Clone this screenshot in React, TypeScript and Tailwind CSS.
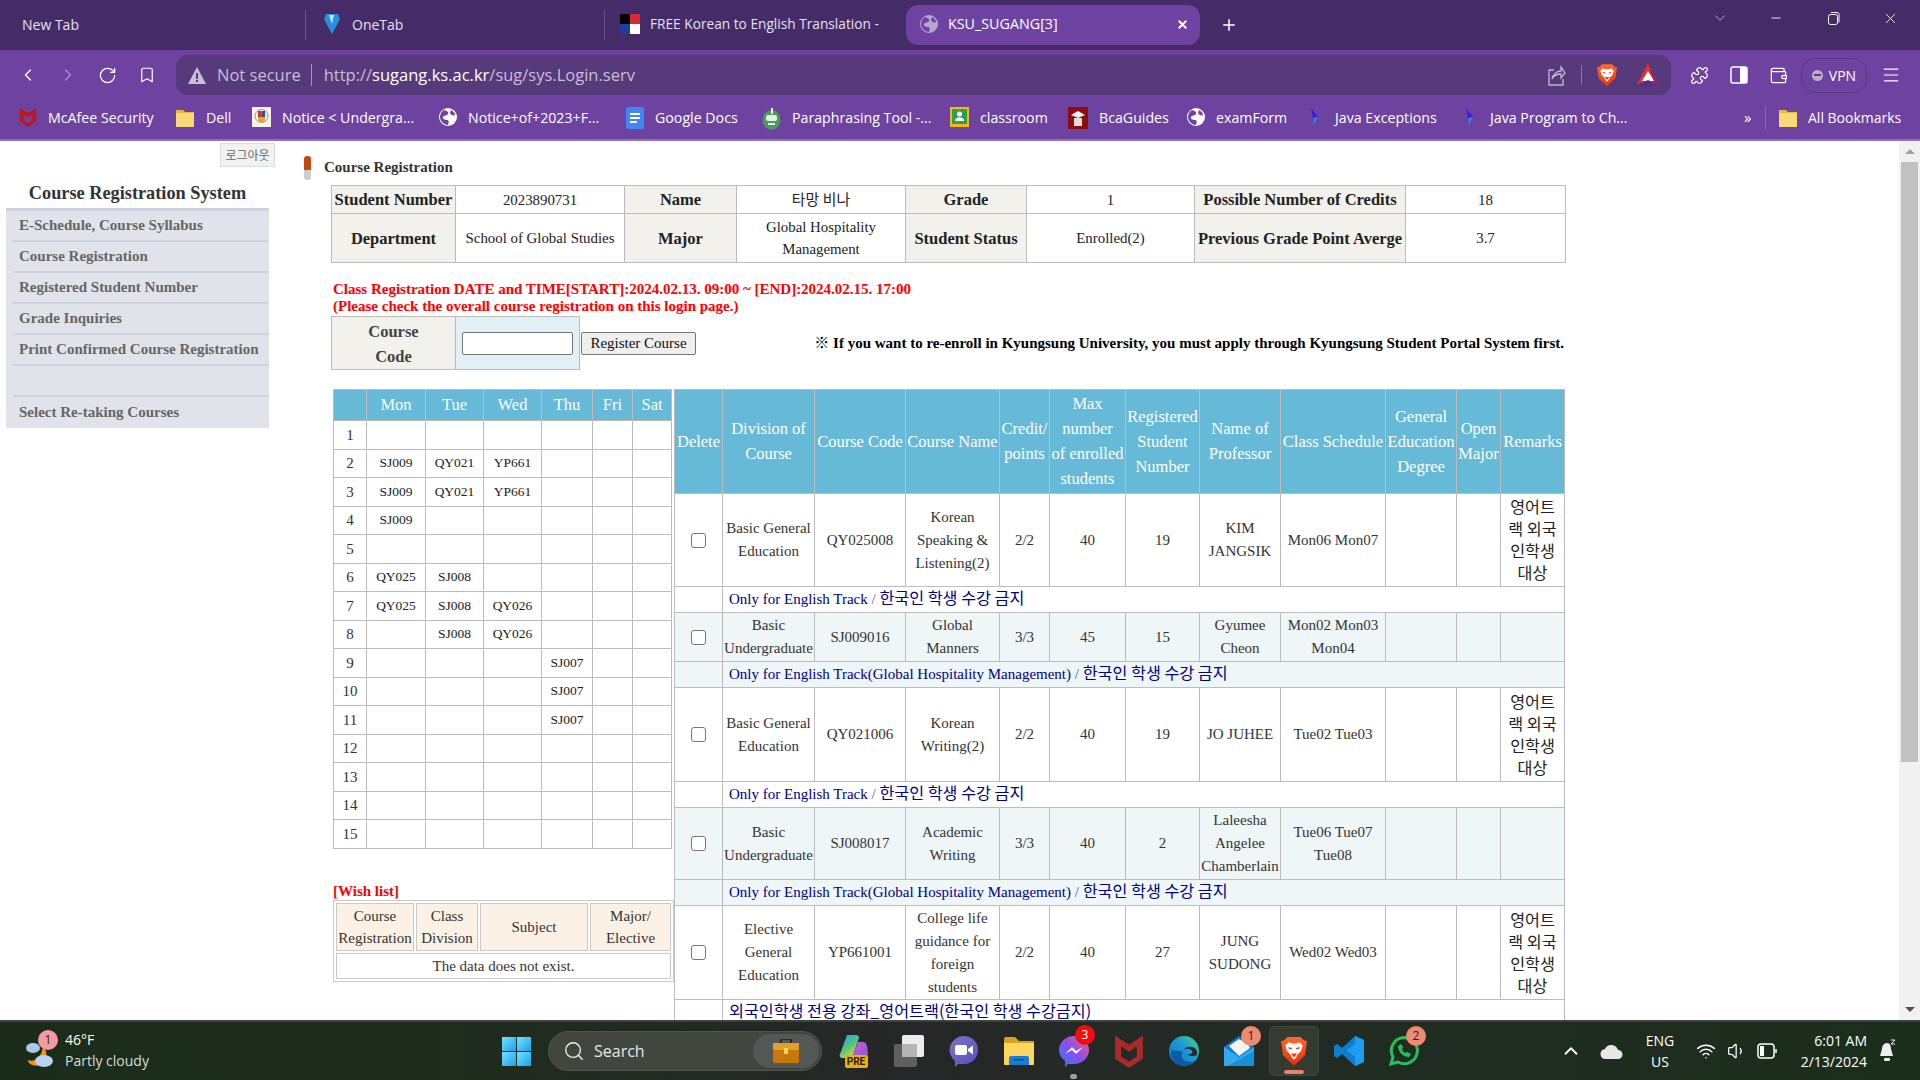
import React from "react";
import { ChevronLeft, ChevronRight, RotateCw, Bookmark, ChevronDown, Minus, X, Plus, Menu, Search, Wifi, Volume1, ChevronUp, Puzzle, Wallet } from "lucide-react";

const UI = "font-['Open_Sans','Noto_Sans',sans-serif]";
const KR = "font-['Liberation_Serif','Noto_Sans_CJK_KR',serif]";
const bd = "border border-[#bcbcbc]";

const Globe = ({ s = 18, fg = "#fff", bg = "#6e42a0" }: { s?: number; fg?: string; bg?: string }) => (
  <svg width={s} height={s} viewBox="0 0 18 18">
    <circle cx="9" cy="9" r="9" fill={fg} />
    <path d="M5 2c3 1 5 2 4 4S5 7 4 9s2 3 4 3 2 2 1 5C5 17 1 13 1 9c0-3 2-6 4-7zM12 2c2 1 4 3 4 5-2 1-4 0-5-2z" fill={bg} />
  </svg>
);
const Folder = () => (
  <svg width="20" height="22" viewBox="0 0 20 22">
    <path d="M1 3h7l2 2h9v15H1z" fill="#e9b93a" />
    <rect x="1" y="6" width="18" height="14" rx="1" fill="#f8d976" />
  </svg>
);
const McAfee = ({ w = 18, h = 20, c = "#c01818" }: { w?: number; h?: number; c?: string }) => (
  <svg width={w} height={h} viewBox="0 0 18 22">
    <path fillRule="evenodd" d="M0 1l4.500 3L9 7l4.500-3L18 1v15l-9 6-9-6zM4 8v6.500l5 3.300 5-3.300V8l-5 3.500z" fill={c} />
  </svg>
);
const Brave = ({ w = 20, h = 24, id = "br" }: { w?: number; h?: number; id?: string }) => (
  <svg width={w} height={h} viewBox="0 0 24 28">
    <defs><linearGradient id={id} x1="0" y1="0" x2="0" y2="1"><stop offset="0" stopColor="#ff6a2b" /><stop offset="1" stopColor="#ee2f0c" /></linearGradient></defs>
    <path d="M6 1h12l3 3 3 1-2 13-10 9.500L2 18 0 5l3-1z" fill={`url(#${id})`} />
    <path d="M7 6l3 1h4l3-1 3 3-1.500 5-3 3-1.500 3-2 2-2-2-1.500-3-3-3L4 9z" fill="#fff" />
    <path d="M7 11l3 1M17 11l-3 1M10.500 17h3l-1.500 2z" stroke="#ee3a12" strokeWidth="1.300" fill="none" />
  </svg>
);
const Ja = () => (
  <svg width="12" height="20" viewBox="0 0 12 20">
    <path d="M2 1l7 9-5 1z" fill="#3b1ae0" />
    <path d="M9 10l-5 9 1-8z" fill="#1c8ce8" />
  </svg>
);

const bookmarks: [number, React.ReactNode, string][] = [
  [156, <McAfee />, "McAfee Security"],
  [77, <Folder />, "Dell"],
  [187, <svg width="19" height="20" viewBox="0 0 19 20"><rect width="19" height="20" fill="#f4f2ea" /><circle cx="9.500" cy="9" r="6.500" fill="none" stroke="#9a9a8a" /><rect x="6" y="4" width="3.500" height="6" fill="#c73a2a" /><rect x="9.500" y="4" width="3.500" height="6" fill="#2a4ea0" /><path d="M6 10h7v2a3.500 3.500 0 0 1-7 0z" fill="#e8a820" /></svg>, "Notice < Undergra..."],
  [187, <Globe />, "Notice+of+2023+F..."],
  [136, <svg width="18" height="22" viewBox="0 0 18 22"><rect width="18" height="22" rx="2" fill="#4285f4" /><rect x="4" y="6" width="10" height="2" fill="#fff" /><rect x="4" y="10" width="10" height="2" fill="#fff" /><rect x="4" y="14" width="7" height="2" fill="#fff" /></svg>, "Google Docs"],
  [188, <svg width="19" height="24" viewBox="0 0 19 24"><ellipse cx="9.500" cy="14" rx="9" ry="10" fill="#4a9a5c" /><rect x="4" y="9" width="11" height="6" rx="2" fill="#e6f1e2" /><rect x="6" y="17" width="7" height="2" fill="#e6f1e2" /><rect x="9" y="2" width="2" height="6" fill="#e6f1e2" /></svg>, "Paraphrasing Tool -..."],
  [118, <svg width="19" height="20" viewBox="0 0 19 20"><rect width="19" height="20" fill="#f5b90f" /><rect x="2" y="2" width="15" height="15" fill="#2f9e4f" /><circle cx="9.500" cy="7" r="2.500" fill="#fff" /><path d="M5 14c0-5 9-5 9 0z" fill="#fff" /></svg>, "classroom"],
  [119, <svg width="20" height="22" viewBox="0 0 20 22"><rect width="20" height="22" fill="#8b0d0d" /><path d="M3 8l7-4 7 4-7 3z" fill="#eee" /><path d="M6 11h8v8H6z" fill="#ddd" /></svg>, "BcaGuides"],
  [120, <Globe />, "examForm"],
  [155, <span className="ml-[2px] mr-[3px]"><Ja /></span>, "Java Exceptions"],
];

function Bookmarks() {
  return (
    <div className={`h-[42px] pb-[3px] bg-[#6e42a0] border-b-2 border-[#9170b8] flex items-center pl-[19px] text-[14.2px] text-white ${UI}`}>
      {bookmarks.map(([w, icon, t], i) => (
        <div key={i} className="flex items-center gap-[11px] shrink-0" style={{ width: w }}>
          <span className="flex items-center">{icon}</span>
          <span className="whitespace-nowrap">{t}</span>
        </div>
      ))}
      <div className="flex items-center gap-[11px] w-[285px] shrink-0">
        <span className="ml-[2px] mr-[3px] flex"><Ja /></span>
        <span className="whitespace-nowrap">Java Program to Ch...</span>
      </div>
      <span className="text-[15px] w-[18px] shrink-0 -ml-[3px] mr-[3px]">»</span>
      <span className="w-px h-[24px] bg-[#8a66b2] mr-[12px]" />
      <div className="flex items-center gap-[10px] shrink-0"><Folder /><span className="whitespace-nowrap text-[14px]">All Bookmarks</span></div>
    </div>
  );
}

function TabBar() {
  return (
    <div className={`h-[50px] bg-[#452c68] flex items-center text-[14px] text-[#e6e0ee] ${UI}`}>
      <div className="w-[306px] pl-[22px] h-[30px] pb-[2px] flex items-center border-r border-[#6a5488] shrink-0">New Tab</div>
      <div className="w-[299px] pl-[16px] h-[30px] pb-[2px] flex items-center gap-[10px] border-r border-[#6a5488] shrink-0">
        <svg width="20" height="22" viewBox="0 0 20 22"><path d="M4 1h12l2 5-8 15L2 6z" fill="#2b8fe0" /><path d="M7 2h5l-2 9z" fill="#bfe6ff" /></svg>
        <span>OneTab</span>
      </div>
      <div className="w-[301px] pl-[15px] h-[30px] pb-[2px] flex items-center gap-[10px] shrink-0 overflow-hidden">
        <svg width="20" height="20" viewBox="0 0 20 20" className="shrink-0"><rect width="10" height="10" fill="#000" /><rect x="10" width="10" height="10" fill="#d8283a" /><rect y="10" width="10" height="10" fill="#1a3fa0" /><rect x="10" y="10" width="10" height="10" fill="#fff" /></svg>
        <span className="whitespace-nowrap text-[13.7px]">FREE Korean to English Translation -</span>
      </div>
      <div className="w-[294px] h-[40px] pb-[2px] bg-[#6e42a0] rounded-[12px] flex items-center pl-[14px] pr-[11px] shrink-0 text-white">
        <Globe s={18} fg="#b7a4cf" bg="#6e42a0" />
        <span className="ml-[10px] flex-1 text-[14.3px]">KSU_SUGANG[3]</span>
        <X size={13} strokeWidth={3.5} />
      </div>
      <Plus size={18} className="ml-[20px] text-white" strokeWidth={2} />
      <div className="ml-auto flex items-center pr-[21px] -mt-[14px] text-white">
        <ChevronDown size={18} strokeWidth={1} className="mr-[40px] text-[#d6cde2]" />
        <Minus size={14} strokeWidth={1.500} className="mr-[44px]" />
        <svg width="14" height="14" viewBox="0 0 14 14" fill="none" stroke="#fff" className="mr-[41px]"><rect x="1.500" y="3.500" width="9" height="10" rx="2" /><path d="M4 1.500h6a2 2 0 0 1 2 2v8" /></svg>
        <X size={17} strokeWidth={1.200} />
      </div>
    </div>
  );
}

function ToolBar() {
  return (
    <div className={`h-[49px] pt-[1px] bg-[#6e42a0] flex items-center text-white ${UI}`}>
      <div className="w-[176px] shrink-0 flex items-center pl-[18px] gap-[20px]">
        <ChevronLeft size={20} strokeWidth={1.600} />
        <ChevronRight size={20} strokeWidth={1.600} className="text-[#a78fc6]" />
        <RotateCw size={19} strokeWidth={1.600} />
        <Bookmark size={18} strokeWidth={1.600} className="ml-[1px]" />
      </div>
      <div className="w-[1495px] h-[40px] shrink-0 rounded-[12px] bg-[#563a7c] flex items-center pl-[12px] pr-[12px] text-[16.5px]">
        <svg width="18" height="17" viewBox="0 0 18 17"><path d="M9 0l9 17H0z" fill="#c7c0d2" /><rect x="8" y="6" width="2" height="6" fill="#563a7c" /><rect x="8" y="13" width="2" height="2" fill="#563a7c" /></svg>
        <span className="ml-[11px] text-[#c7bfd3]">Not secure</span>
        <span className="w-px h-[22px] bg-[#a596ba] ml-[10px] mr-[12px]" />
        <span className="text-[#c7bfd3]">http://<span className="text-white">sugang.ks.ac.kr</span>/sug/sys.Login.serv</span>
        <div className="ml-auto flex items-center">
          <svg width="19" height="21" viewBox="0 0 19 21" fill="none" stroke="#c2b8cf" strokeWidth="1.300"><path d="M7 5H2v15h14v-6" /><path d="M5 14c1-5 5-8 9-8V2l4 6-4 5V9c-3 0-7 1-9 5z" /></svg>
          <span className="w-px h-[20px] bg-[#8a76a6] mx-[15px]" />
          <Brave w={20} h={24} id="br1" />
          <svg width="22" height="24" viewBox="0 0 22 24" className="ml-[20px]"><path d="M11 0l11 22-11-5-11 5z" fill="#e4322b" /><path d="M11 0l11 22-5-2z" fill="#8a2a6a" /><path d="M11 8l6 10H5z" fill="#fff" /><path d="M0 22l11-5 11 5-11 2z" fill="#5d2a8a" /></svg>
        </div>
      </div>
      <Puzzle size={19} strokeWidth={1.600} className="ml-[19px] shrink-0" />
      <svg width="18" height="18" viewBox="0 0 18 18" fill="none" stroke="#fff" strokeWidth="1.500" className="ml-[21px] shrink-0"><rect x="1" y="1" width="16" height="16" rx="2" /><rect x="10" y="1" width="7" height="16" fill="#fff" stroke="none" /></svg>
      <Wallet size={19} strokeWidth={1.600} className="ml-[21px] shrink-0" />
      <div className="ml-[13px] w-[66px] h-[35px] shrink-0 rounded-[14px] border border-[#563a7c] flex items-center justify-center gap-[6px] text-[14px]">
        <span className="w-[11px] h-[11px] rounded-full bg-[#b8aecb] flex items-center justify-center"><span className="w-[7px] h-[2px] bg-[#563a7c]" /></span>
        <span>VPN</span>
      </div>
      <Menu size={20} strokeWidth={1.400} className="ml-[14px] shrink-0" />
    </div>
  );
}

const menu = ["E-Schedule, Course Syllabus", "Course Registration", "Registered Student Number", "Grade Inquiries", "Print Confirmed Course Registration", "", "Select Re-taking Courses"];

function Sidebar() {
  return (
    <div className="w-[304px] shrink-0 pl-[6px] flex flex-col">
      <div className="flex justify-end pr-[29px] pt-[2px]">
        <div className="w-[55px] h-[24px] bg-[#f1f1f1] border border-[#dcdcdc] text-[12px] text-[#666] flex items-center justify-center font-['Noto_Sans_CJK_KR',sans-serif]">로그아웃</div>
      </div>
      <div className="w-[263px] h-[41px] pt-[13px] flex items-center justify-center text-[18.3px] font-bold text-[#333]">Course Registration System</div>
      <div className="w-[263px] bg-[#e0e3ea] border-t-[3px] border-[#cfd3df]">
        {menu.map((m, i) => (
          <div key={i} className={`ml-[7px] h-[31px] pb-[1px] flex items-center text-[15px] font-bold text-[#666] whitespace-nowrap ${i < 6 ? "border-b-2 border-[#cfd3df]" : ""}`}>
            <span className="ml-[6px]">{m}</span>
          </div>
        ))}
      </div>
    </div>
  );
}

function InfoTable() {
  const th = `${bd} bg-[#f3f1ec] font-bold text-[16.5px] text-[#222] text-center p-0 leading-[21px]`;
  const td = `${bd} text-center text-[14.85px] text-[#222] p-0 leading-[22px]`;
  return (
    <table className="table-fixed border-collapse w-[1234px] ml-[4px]">
      <colgroup>
        {[124, 169, 112, 169, 121, 168, 211, 160].map((w, i) => <col key={i} style={{ width: w }} />)}
      </colgroup>
      <tbody>
        <tr className="h-[28px]">
          <td className={`${th} whitespace-nowrap`}>Student Number</td><td className={td}>2023890731</td>
          <td className={th}>Name</td><td className={td}>타망 비나</td>
          <td className={th}>Grade</td><td className={td}>1</td>
          <td className={`${th} whitespace-nowrap`}>Possible Number of Credits</td><td className={td}>18</td>
        </tr>
        <tr className="h-[49px]">
          <td className={th}>Department</td><td className={td}>School of Global Studies</td>
          <td className={th}>Major</td><td className={td}>Global Hospitality Management</td>
          <td className={th}>Student Status</td><td className={td}>Enrolled(2)</td>
          <td className={`${th} whitespace-nowrap`}>Previous Grade Point Averge</td><td className={td}>3.7</td>
        </tr>
      </tbody>
    </table>
  );
}

function CodeRow() {
  return (
    <div className="flex items-center ml-[4px] w-[1234px]">
      <table className="table-fixed border-collapse w-[248px] shrink-0">
        <colgroup><col style={{ width: 124 }} /><col style={{ width: 124 }} /></colgroup>
        <tbody>
          <tr className="h-[53px]">
            <td className={`${bd} bg-[#f3f1ec] font-bold text-[16.5px] text-[#444] text-center p-0 pt-[2px] leading-[25px]`}>Course<br />Code</td>
            <td className={`${bd} bg-[#e0f0f5] p-0`}>
              <div className="ml-[6px] w-[111px] h-[23px] bg-white border border-[#767676] rounded-[2px]" />
            </td>
          </tr>
        </tbody>
      </table>
      <div className="ml-[1px] w-[115px] h-[23px] shrink-0 bg-[#efefef] border border-[#767676] rounded-[2px] flex items-center justify-center text-[15px] text-[#111]">Register Course</div>
      <div className="flex-1 text-right pr-[1px] text-[15px] font-bold text-black whitespace-nowrap">※ If you want to re-enroll in Kyungsung University, you must apply through Kyungsung Student Portal System first.</div>
    </div>
  );
}

const tt: Record<number, string[]> = {
  2: ["SJ009", "QY021", "YP661"], 3: ["SJ009", "QY021", "YP661"], 4: ["SJ009"],
  6: ["QY025", "SJ008"], 7: ["QY025", "SJ008", "QY026"], 8: ["", "SJ008", "QY026"],
  9: ["", "", "", "SJ007"], 10: ["", "", "", "SJ007"], 11: ["", "", "", "SJ007"],
};

function TimeTable() {
  const days = ["Mon", "Tue", "Wed", "Thu", "Fri", "Sat"];
  return (
    <table className="table-fixed border-collapse w-[338px]">
      <colgroup>{[33, 59, 58, 58, 51, 40, 39].map((w, i) => <col key={i} style={{ width: w }} />)}</colgroup>
      <thead>
        <tr className="h-[31px] bg-[#66bad7]">
          <th className={`${bd} p-0`} />
          {days.map(d => <th key={d} className={`${bd} p-0 text-[16.5px] font-normal text-white`}>{d}</th>)}
        </tr>
      </thead>
      <tbody>
        {Array.from({ length: 15 }, (_, r) => (
          <tr key={r} className="h-[28.5px]">
            <td className={`${bd} p-0 text-center text-[15px] text-[#333]`}>{r + 1}</td>
            {[0, 1, 2, 3, 4, 5].map(c => (
              <td key={c} className={`${bd} p-0 text-center text-[13.5px] font-normal text-[#222]`}>{tt[r + 1]?.[c] ?? ""}</td>
            ))}
          </tr>
        ))}
      </tbody>
    </table>
  );
}

function WishList() {
  const c = "border border-[#c9c9c9] p-0 text-center text-[15px] text-[#333] leading-[22px]";
  return (
    <div className="w-[339px]">
      <div className="mt-[33px] h-[18px] leading-[18px] text-[15px] font-bold text-[#ff0000]">[Wish list]</div>
      <table className="table-fixed border-separate border-spacing-[2px] w-[339px] border border-[#c9c9c9]">
        <colgroup>{[78, 62, 108, 81].map((w, i) => <col key={i} style={{ width: w }} />)}</colgroup>
        <tbody>
          <tr className="h-[48px] bg-[#fbf1e5]">
            <td className={c}>Course<br />Registration</td>
            <td className={c}>Class<br />Division</td>
            <td className={c}>Subject</td>
            <td className={c}>Major/<br />Elective</td>
          </tr>
          <tr className="h-[26px]"><td colSpan={4} className={c}>The data does not exist.</td></tr>
        </tbody>
      </table>
    </div>
  );
}

type Row = { h: number; v: string[]; remark: boolean; note: React.ReactNode; noteH: number; alt: boolean };
const K = ({ children }: { children: React.ReactNode }) => <span className="font-['Noto_Sans_CJK_KR',sans-serif] text-[16.2px]">{children}</span>;
const ban = <K>한국인 학생 수강 금지</K>;
const note1 = <>Only for English Track <span className="text-[#5a5a9a]">/</span> {ban}</>;
const note2 = <>Only for English Track(Global Hospitality Management) <span className="text-[#5a5a9a]">/</span> {ban}</>;

const rows: Row[] = [
  { h: 93, v: ["Basic General Education", "QY025008", "Korean Speaking & Listening(2)", "2/2", "40", "19", "KIM JANGSIK", "Mon06 Mon07"], remark: true, note: note1, noteH: 26, alt: false },
  { h: 49, v: ["Basic Undergraduate", "SJ009016", "Global Manners", "3/3", "45", "15", "Gyumee Cheon", "Mon02 Mon03 Mon04"], remark: false, note: note2, noteH: 26, alt: true },
  { h: 94, v: ["Basic General Education", "QY021006", "Korean Writing(2)", "2/2", "40", "19", "JO JUHEE", "Tue02 Tue03"], remark: true, note: note1, noteH: 25, alt: false },
  { h: 72, v: ["Basic Undergraduate", "SJ008017", "Academic Writing", "3/3", "40", "2", "Laleesha Angelee Chamberlain", "Tue06 Tue07 Tue08"], remark: false, note: note2, noteH: 26, alt: true },
  { h: 94, v: ["Elective General Education", "YP661001", "College life guidance for foreign students", "2/2", "40", "27", "JUNG SUDONG", "Wed02 Wed03"], remark: true, note: <K>외국인학생 전용 강좌_영어트랙(한국인 학생 수강금지)</K>, noteH: 26, alt: false },
];

function MainTable() {
  const heads: React.ReactNode[] = ["Delete", "Division of Course", "Course Code", "Course Name", "Credit/ points", <>Max<br />number<br />of enrolled<br />students</>, "Registered Student Number", "Name of Professor", "Class Schedule", "General Education Degree", "Open Major", "Remarks"];
  const widths = [48, 92, 91, 94, 50, 76, 74, 81, 105, 71, 44, 64];
  const td = `${bd} p-0 text-center text-[15px] text-[#333] leading-[23px]`;
  return (
    <table className="table-fixed border-collapse w-[890px] shrink-0 ml-[3px]">
      <colgroup>{widths.map((w, i) => <col key={i} style={{ width: w }} />)}</colgroup>
      <thead>
        <tr className="h-[104px] bg-[#66bad7]">
          {heads.map((h, i) => <th key={i} className={`${bd} p-0 pb-[1px] text-[16.5px] font-normal text-white leading-[25px]`}>{h}</th>)}
        </tr>
      </thead>
      <tbody>
        {rows.map((r, i) => (
          <React.Fragment key={i}>
            <tr className={r.alt ? "bg-[#eff6f8]" : ""} style={{ height: r.h }}>
              <td className={td}>
                <span className="inline-block align-middle mb-[2px] w-[15px] h-[15px] bg-white border border-[#767676] rounded-[3px]" />
              </td>
              {r.v.map((v, j) => <td key={j} className={td}>{v}</td>)}
              <td className={td} />
              <td className={td} />
              <td className={`${bd} p-0 px-[4px] pb-[2px] text-center text-[16.2px] leading-[22px] text-[#222] font-['Noto_Sans_CJK_KR',sans-serif]`}>{r.remark ? "영어트랙 외국인학생 대상" : ""}</td>
            </tr>
            <tr className={r.alt ? "bg-[#eff6f8]" : ""} style={{ height: r.noteH }}>
              <td className={bd} />
              <td colSpan={11} className={`${bd} p-0 pl-[6px] pb-[3px] text-left text-[15px] text-[#000080] leading-[20px]`}>{r.note}</td>
            </tr>
          </React.Fragment>
        ))}
      </tbody>
    </table>
  );
}

function Content() {
  return (
    <div className={`flex-1 min-w-0 flex flex-col overflow-hidden ${KR}`}>
      <div className="h-[44px] flex items-start shrink-0">
        <div className="mt-[15px] w-[7px] h-[24px] flex flex-col shrink-0">
          <span className="h-[14px] bg-[#c04a10] rounded-t-[3px]" />
          <span className="h-[10px] bg-[#cccccc] rounded-b-[3px]" />
        </div>
        <span className="ml-[13px] mt-[17px] text-[15px] font-bold text-[#333] leading-[18px]">Course Registration</span>
      </div>
      <div className="pl-[23px]">
        <InfoTable />
        <div className="ml-[6px] mt-[18px] text-[15px] leading-[17px] font-bold text-[#ff0000] whitespace-nowrap">
          Class Registration DATE and TIME[START]:2024.02.13. 09:00 ~ [END]:2024.02.15. 17:00<br />
          (Please check the overall course registration on this login page.)
        </div>
        <div className="mt-[1px]"><CodeRow /></div>
        <div className="flex items-start mt-[19px] pl-[6px]">
          <div className="w-[338px] shrink-0">
            <TimeTable />
            <WishList />
          </div>
          <MainTable />
        </div>
      </div>
    </div>
  );
}

function Scrollbar() {
  return (
    <div className="w-[21px] shrink-0 bg-[#f1f1f1] flex flex-col items-center">
      <div className="h-[21px] flex items-center justify-center"><span className="w-0 h-0 border-x-[5px] border-x-transparent border-b-[5px] border-b-[#a3a3a3]" /></div>
      <div className="w-[17px] h-[600px] bg-[#c1c1c1]" />
      <div className="flex-1" />
      <div className="h-[21px] flex items-center justify-center"><span className="w-0 h-0 border-x-[5px] border-x-transparent border-t-[5px] border-t-[#505050]" /></div>
    </div>
  );
}

const Badge = ({ n, c, tc = "#fff", pos }: { n: number; c: string; tc?: string; pos: string }) => (
  <span className={`absolute ${pos} w-[20px] h-[20px] rounded-full flex items-center justify-center text-[12px]`} style={{ background: c, color: tc }}>{n}</span>
);

const tray: React.ReactNode[] = [
  <div className="relative w-[30px] h-[34px]">
    <svg width="30" height="26" viewBox="0 0 30 26">
      <defs>
        <linearGradient id="cp1" x1="0" y1="0" x2="0.6" y2="1"><stop offset="0" stopColor="#1fa9e8" /><stop offset="0.55" stopColor="#4cc38a" /><stop offset="1" stopColor="#e3d23a" /></linearGradient>
        <linearGradient id="cp2" x1="0" y1="0" x2="1" y2="1"><stop offset="0" stopColor="#e05ac8" /><stop offset="1" stopColor="#7a5ae0" /></linearGradient>
      </defs>
      <path d="M8 1h9c2 0 3 1 3 3l-7 20H3c-2 0-3-2-2-4z" fill="url(#cp1)" />
      <path d="M19 8h5c2 0 3 1 4 4l1 7c0 3-2 5-5 5H13z" fill="url(#cp2)" />
    </svg>
    <span className="absolute left-[6px] bottom-0 w-[23px] h-[13px] rounded-[2px] bg-[#efb000] text-[#222] text-[10px] leading-[13px] font-bold text-center font-['Roboto',sans-serif]">PRE</span>
  </div>,
  <svg width="30" height="32" viewBox="0 0 30 32"><rect x="8" y="0" width="22" height="22" rx="2" fill="#ececec" /><rect x="0" y="9" width="23" height="23" rx="2" fill="#5f5f5f" /><rect x="8" y="9" width="15" height="13" fill="#b5b5b5" /></svg>,
  <svg width="30" height="32" viewBox="0 0 30 32"><defs><linearGradient id="tm" x1="0" y1="0" x2="1" y2="1"><stop offset="0" stopColor="#7d72c4" /><stop offset="1" stopColor="#5650c0" /></linearGradient></defs><path d="M15 1a14 14 0 0 1 0 28H9l-3 3v-6A14 14 0 0 1 15 1z" fill="url(#tm)" /><rect x="6" y="10" width="12" height="10" rx="2" fill="#fff" /><path d="M19 14l5-3.500v9L19 16z" fill="#fff" /></svg>,
  <svg width="30" height="28" viewBox="0 0 30 28"><path d="M0 2a2 2 0 0 1 2-2h9l4 4h15v24H0z" fill="#d9a021" /><path d="M0 6h30v20a2 2 0 0 1-2 2H2a2 2 0 0 1-2-2z" fill="#fbd75e" /><path d="M5 28v-7a2 2 0 0 1 2-2h16a2 2 0 0 1 2 2v7z" fill="#1c7cd1" /><rect x="10" y="22" width="10" height="1.500" fill="#0c4f90" /></svg>,
  <svg width="30" height="32" viewBox="0 0 30 32"><defs><linearGradient id="ms" x1="0" y1="1" x2="1" y2="0"><stop offset="0" stopColor="#2f7df6" /><stop offset="0.5" stopColor="#8a4df0" /><stop offset="1" stopColor="#f5607a" /></linearGradient></defs><path d="M15 1c8 0 15 6 15 14s-7 14-15 14H9l-3 3v-6C2 23 0 19 0 15 0 7 7 1 15 1z" fill="url(#ms)" /><path d="M6 19l7-7 4 4 7-4-7 7-4-4z" fill="#fff" /></svg>,
  <McAfee w={28} h={34} c="#a92a28" />,
  <svg width="30" height="30" viewBox="0 0 30 30"><defs><linearGradient id="ed" x1="0" y1="1" x2="1" y2="0"><stop offset="0" stopColor="#0f6cbd" /><stop offset="0.6" stopColor="#1a9ed6" /><stop offset="1" stopColor="#5cd66e" /></linearGradient></defs><circle cx="15" cy="15" r="15" fill="url(#ed)" /><path d="M2 16c0 8 6 14 13 14 4 0 8-2 10-5-4 2-9 1-11-2-2-2-2-5 0-7-3-1-11-3-12 0z" fill="#0b5aa6" /><path d="M14 15c2-3 7-3 9 0 1 2 0 3-2 3h-3c2 2 6 3 10 1v-4c-2-5-11-6-14 0z" fill="#262a2a" /></svg>,
  <svg width="30" height="30" viewBox="0 0 30 30"><path d="M0 11L15 0l15 11v19H0z" fill="#0f78c8" /><path d="M5 10L15 3l9 5 2 4-11 8z" fill="#f4f4f4" /><path d="M0 11l15 10 15-10v19H0z" fill="#35a8ee" /><path d="M30 30H4l26-15z" fill="#1490df" /></svg>,
  <Brave w={26} h={32} id="br2" />,
  <svg width="30" height="30" viewBox="0 0 30 30"><path d="M21 0l9 4v22l-9 4L8 18l-5 4-3-2V10l3-2 5 4z" fill="#0c7fd0" /><path d="M21 0l9 4v22l-9 4zM21 8l-9 7 9 7z" fill="#1f9cf0" /><path d="M3 8l18 14v-1L3 8z" fill="#0a6ab2" /></svg>,
  <svg width="30" height="30" viewBox="0 0 30 30" fill="none" stroke="#25c05a" strokeWidth="3"><path d="M2 28l2-7A13 13 0 1 1 9 26z" /><path d="M9 10c0 6 5 11 11 11l2-3-4-2-2 1c-1-1-3-2-3-4l1-2-2-3z" fill="#25c05a" stroke="none" /></svg>,
];

function Taskbar() {
  return (
    <div className={`h-[60px] shrink-0 border-t-2 border-[#3c4439] flex items-center text-white bg-[linear-gradient(90deg,#1b2d1a_0%,#1f2c1d_22%,#262728_48%,#232a25_60%,#1b2e1b_100%)] ${UI}`}>
      <div className="w-[502px] shrink-0 flex items-center pl-[25px]">
        <div className="relative w-[33px] h-[38px]">
          <svg width="33" height="38" viewBox="0 0 33 38"><ellipse cx="8" cy="16" rx="7" ry="5" fill="#a9c9ec" /><path d="M18 14a12 12 0 0 1-3 19C9 35 3 32 3 28c8 3 14-4 15-14z" fill="#f2931f" /><ellipse cx="19" cy="29" rx="9" ry="6" fill="#b8d3f0" /></svg>
          <Badge n={1} c="#f59aa2" tc="#222" pos="left-[13px] top-[-2px]" />
        </div>
        <div className="ml-[7px] flex flex-col text-[14px] leading-[21px] -mt-[2px]"><span>46°F</span><span className="text-[#d8dcd6]">Partly cloudy</span></div>
      </div>
      <div className="w-[29px] h-[29px] shrink-0 grid grid-cols-2 grid-rows-2 gap-[1px] mr-[17px]">
        {[0, 1, 2, 3].map(i => <span key={i} className="bg-gradient-to-br from-[#6be5ff] to-[#1a9ee8]" />)}
      </div>
      <div className="w-[274px] h-[40px] shrink-0 rounded-full bg-[#41473f] border border-[#50564e] flex items-center pl-[14px] pr-[2px]">
        <Search size={22} strokeWidth={1.500} className="text-[#eee]" />
        <span className="ml-[9px] text-[16px] text-[#e8e8e8]">Search</span>
        <div className="ml-auto w-[66px] h-[34px] rounded-full bg-[#545854] flex items-center justify-center">
          <svg width="26" height="24" viewBox="0 0 26 24"><rect x="8" y="0" width="10" height="5" fill="none" stroke="#3a2a10" strokeWidth="2" /><rect y="4" width="26" height="20" rx="2" fill="#c8780a" /><rect y="4" width="26" height="7" fill="#e0a030" /><rect x="11" y="9" width="4" height="6" fill="#f4d84a" /></svg>
        </div>
      </div>
      <div className="ml-[4px] flex shrink-0">
        {tray.map((ic, i) => (
          <div key={i} className={`relative h-[50px] flex items-center justify-center ${i === 8 ? "w-[50px] mx-[2.5px] bg-[#343b31] rounded-[5px] border border-[#40473d]" : "w-[55px]"}`}>
            {ic}
            {i === 4 && <><Badge n={3} c="#f50d0d" pos="right-[6px] top-[-1px]" /><span className="absolute bottom-[-3px] w-[7px] h-[5px] rounded-full bg-[#a0a0a0]" /></>}
            {i === 7 && <Badge n={1} c="#ee8a72" tc="#222" pos="right-[5px] top-[0px]" />}
            {i === 8 && <span className="absolute bottom-[1px] w-[20px] h-[4px] rounded-[2px] bg-[#ee7f6c]" />}
            {i === 10 && <Badge n={2} c="#ee8a72" tc="#222" pos="right-[5px] top-[0px]" />}
          </div>
        ))}
      </div>
      <ChevronUp size={22} strokeWidth={2} className="ml-[129px] shrink-0" />
      <svg width="24" height="16" viewBox="0 0 24 16" className="ml-[18px] shrink-0"><path d="M6 16a5 5 0 0 1-1-10 7 7 0 0 1 13 1 4.500 4.500 0 0 1 0 9z" fill="#e8e8e8" /></svg>
      <div className="ml-[13px] w-[46px] shrink-0 text-center text-[14px] leading-[21px]">ENG<br />US</div>
      <Wifi size={20} strokeWidth={1.800} className="ml-[13px] shrink-0" />
      <Volume1 size={20} strokeWidth={1.500} className="ml-[11px] shrink-0" />
      <svg width="20" height="16" viewBox="0 0 20 16" fill="none" stroke="#fff" strokeWidth="1.500" className="ml-[10px] shrink-0"><rect x="1" y="1" width="16" height="14" rx="3" /><rect x="3" y="3" width="4" height="10" fill="#fff" stroke="none" /><path d="M19 6v4" /></svg>
      <div className="ml-[6px] w-[84px] shrink-0 text-right text-[14px] leading-[21px] whitespace-nowrap"><div>6:01 AM</div><div>2/13/2024</div></div>
      <svg width="18" height="26" viewBox="0 0 18 26" className="ml-[11px] shrink-0"><path d="M9 5c3 0 4 3 4 6l2 7H2l2-7c0-3 2-6 5-6z" fill="#eee" /><rect x="6" y="20" width="6" height="3" rx="1" fill="#eee" /><path d="M13 2h4l-4 4h4" stroke="#eee" fill="none" /></svg>
    </div>
  );
}

export default function App() {
  return (
    <div className="w-[1920px] h-[1080px] overflow-hidden flex flex-col bg-white">
      <TabBar />
      <ToolBar />
      <Bookmarks />
      <div className="flex-1 min-h-0 flex overflow-hidden font-['Liberation_Serif',serif] bg-white">
        <Sidebar />
        <Content />
        <Scrollbar />
      </div>
      <Taskbar />
    </div>
  );
}
